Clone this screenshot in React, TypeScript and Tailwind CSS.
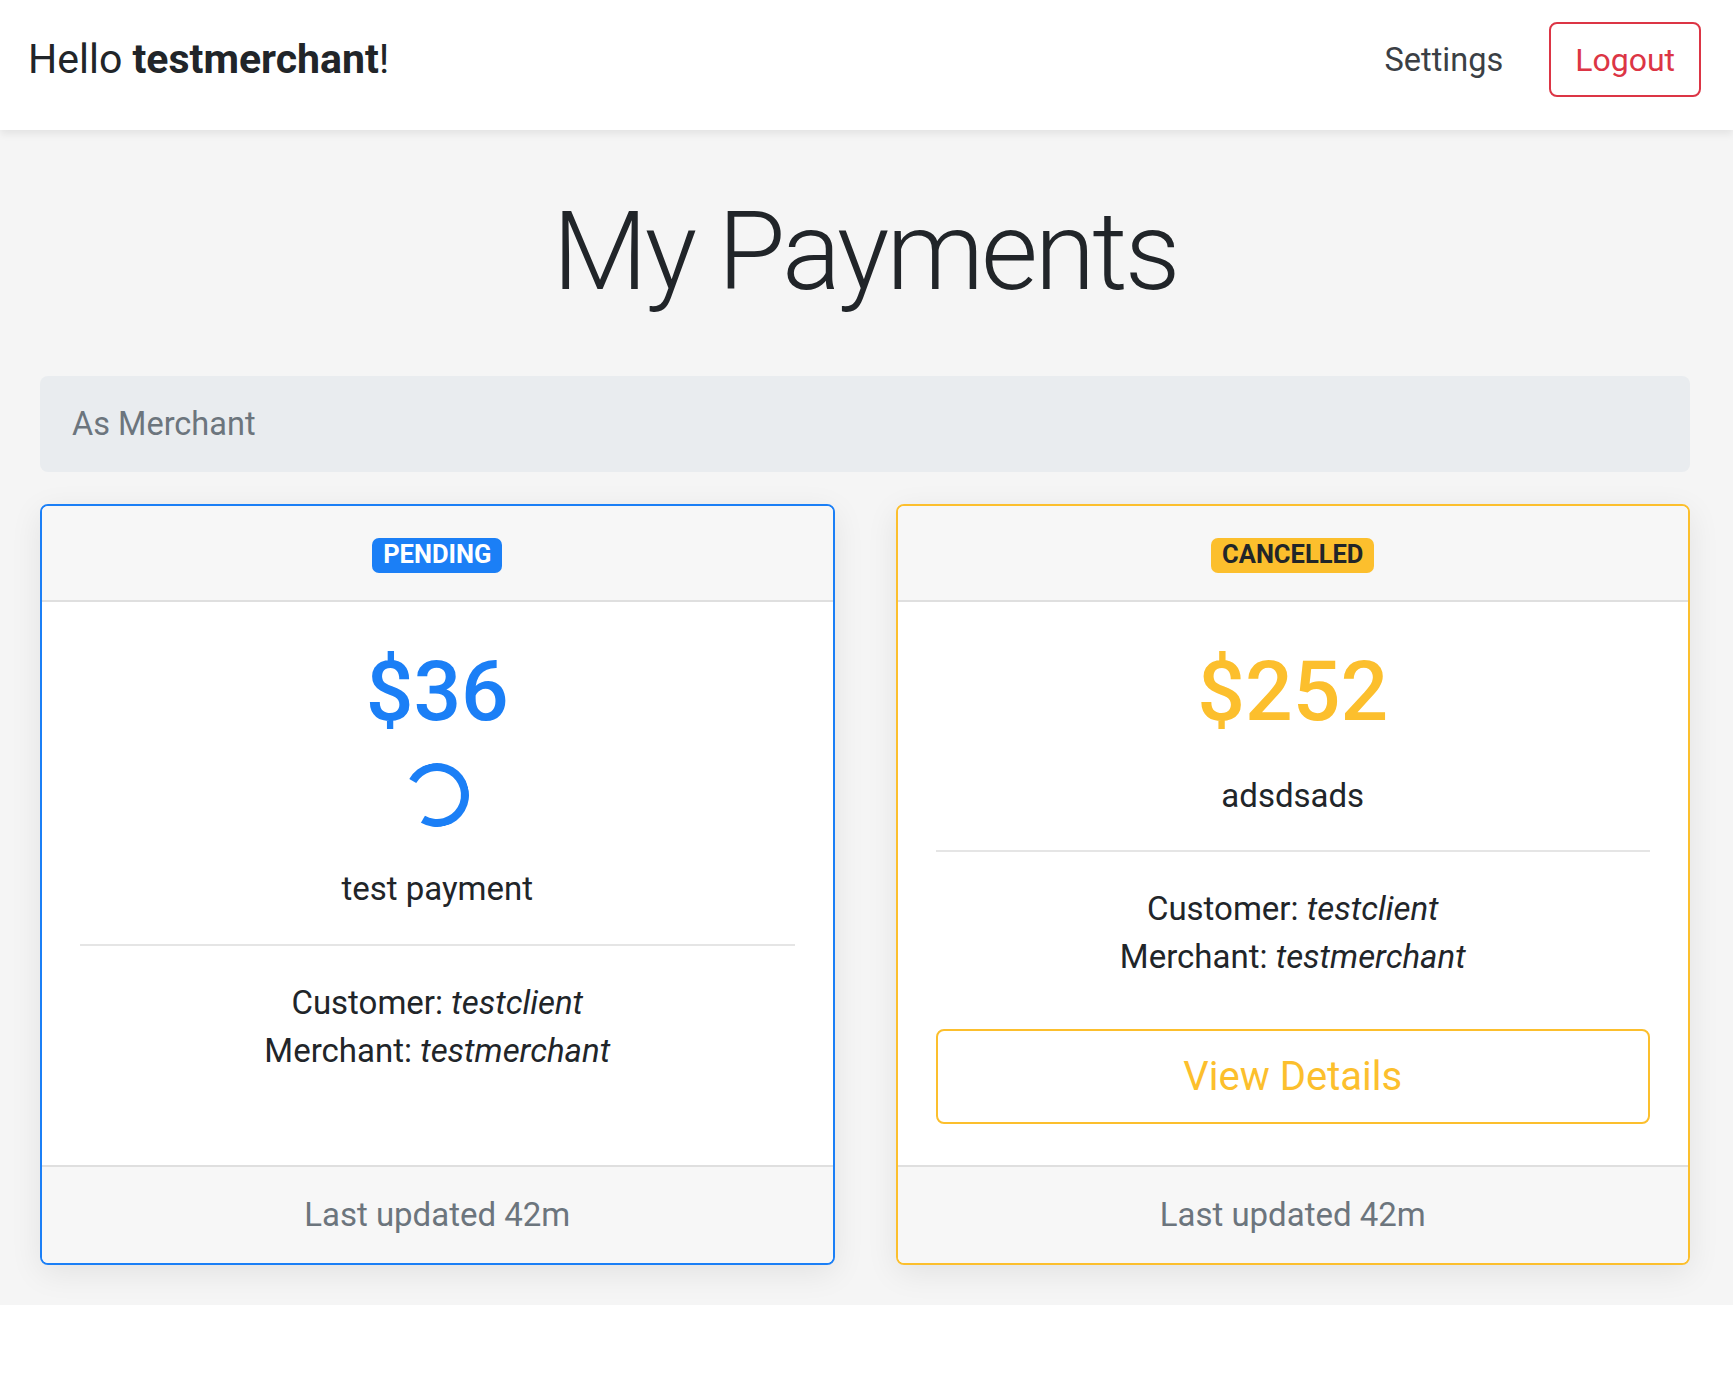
import React from 'react';

const BLUE = '#1b7ff6';
const YELLOW = '#fcbf2d';

type Payment = {
  status: 'PENDING' | 'CANCELLED';
  amount: number;
  description: string;
  customer: string;
  merchant: string;
  updated: string;
};

const payments: Payment[] = [
  { status: 'PENDING', amount: 36, description: 'test payment', customer: 'testclient', merchant: 'testmerchant', updated: '42m' },
  { status: 'CANCELLED', amount: 252, description: 'adsdsads', customer: 'testclient', merchant: 'testmerchant', updated: '42m' },
];

function Header() {
  return (
    <header className="relative z-10 flex h-[130px] items-start justify-between bg-white pl-[28px] pr-[32px] shadow-[0_4px_8px_rgba(0,0,0,0.075)]">
      <div className="mt-[29px] text-[41px] leading-[60px] text-[#212529]">
        Hello <span className="font-bold">testmerchant</span>!
      </div>
      <div className="mt-[22px] flex items-center gap-[46px]">
        <a className="text-[32.5px] leading-[48px] text-[#3b3f45]">Settings</a>
        <button className="flex h-[75px] items-center rounded-[8px] border-2 border-[#dc3545] px-[24px] text-[32px] leading-[48px] text-[#dc3545]">
          Logout
        </button>
      </div>
    </header>
  );
}

function PaymentCard({ p }: { p: Payment }) {
  const pending = p.status === 'PENDING';
  return (
    <div
      className={
        'flex flex-col overflow-hidden rounded-[8px] border-2 bg-white shadow-[0_8px_32px_rgba(0,0,0,0.08)] ' +
        (pending ? 'border-[#1b7ff6]' : 'border-[#fcbf2d]')
      }
    >
      <div className="flex h-[96px] items-center justify-center border-b-2 border-[#dfdfdf] bg-[#f7f7f7] pt-[4px]">
        <span
          className={
            'flex h-[35px] items-center rounded-[7px] px-[11px] text-[25.5px] font-bold leading-none ' +
            (pending ? 'bg-[#1b7ff6] text-white' : 'bg-[#fcbf2d] text-[#212529]')
          }
        >
          {p.status}
        </span>
      </div>

      <div className="flex flex-1 flex-col items-center px-[38px] pb-[41px] pt-[42px] text-center text-[33px] leading-[48px] text-[#212529]">
        <h1
          className="text-[84px] font-medium leading-[96px]"
          style={{ color: pending ? BLUE : YELLOW }}
        >
          ${p.amount}
        </h1>
        {pending && (
          <div className="mt-[23px] h-[64px] w-[64px] rotate-[165deg] rounded-full border-[8px] border-[#1b7ff6] border-r-transparent" />
        )}
        <p className={pending ? 'mt-[38px]' : 'mt-[32px]'}>{p.description}</p>
        <div className={'h-[2px] w-full bg-[#e5e5e5] ' + (pending ? 'mt-[31px]' : 'mt-[30px]')} />
        <div className="mt-[33px]">
          <div>
            Customer: <em>{p.customer}</em>
          </div>
          <div>
            Merchant: <em>{p.merchant}</em>
          </div>
        </div>
        {!pending && (
          <button className="mt-[48px] flex h-[95px] w-full items-center justify-center rounded-[8px] border-2 border-[#fcbf2d] text-[40px] leading-[60px] text-[#fcbf2d]">
            View Details
          </button>
        )}
      </div>

      <div className="flex h-[98px] items-center justify-center border-t-2 border-[#dfdfdf] bg-[#f7f7f7] text-[33px] leading-[48px] text-[#6c757d]">
        Last updated {p.updated}
      </div>
    </div>
  );
}

export default function App() {
  return (
    <div className="min-h-[1374px] bg-white font-['Roboto',sans-serif]">
      <Header />
      <main className="bg-[#f5f5f5] pb-[40px] pl-[40px] pr-[43px] pt-[56px]">
        <h1 className="text-center text-[110px] font-light leading-[132px] tracking-[-3px] text-[#212529]">
          My Payments
        </h1>
        <div className="mt-[58px] rounded-[8px] bg-[#e9ecef] px-[32px] py-[24px] text-[32.5px] leading-[48px] text-[#6c757d]">
          As Merchant
        </div>
        <div className="mt-[32px] grid grid-cols-2 gap-[61px]">
          {payments.map((p) => (
            <PaymentCard key={p.status} p={p} />
          ))}
        </div>
      </main>
    </div>
  );
}
